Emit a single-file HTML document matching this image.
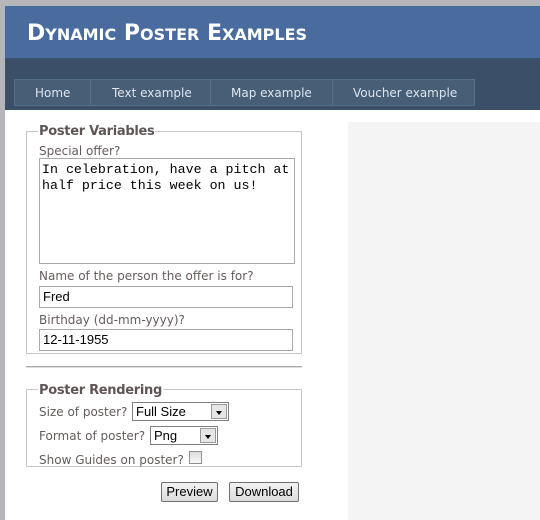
<!DOCTYPE html>
<html><head><style>
*{margin:0;padding:0;box-sizing:border-box}
body{width:540px;height:520px;background:#fff;position:relative;overflow:hidden;font-family:"DejaVu Sans","Liberation Sans",sans-serif}
.a{position:absolute}
.lbl{position:absolute;font-size:12px;color:#665c5c;white-space:nowrap}
.leg{position:absolute;font-size:13px;font-weight:bold;color:#5f5555;background:#fff;padding:0 1px;white-space:nowrap;letter-spacing:-0.3px}
.fs{position:absolute;border:1px solid #c8c8c8}
.inp{position:absolute;border:1px solid #a9a9a9;background:#fff;font-family:"Liberation Sans",sans-serif;font-size:13px;color:#000;padding:2px 0 0 3px}
.sel{position:absolute;border:1px solid #7f7f7f;background:#fff;font-family:"Liberation Sans",sans-serif;font-size:13px;padding:1px 0 0 3px}
.sel b{position:absolute;right:1px;top:1px;bottom:1px;width:16px;background:#e6e6e6;border:1px solid #999}
.sel b:after{content:"";position:absolute;left:4px;top:6px;border-left:3px solid transparent;border-right:3px solid transparent;border-top:4px solid #000}
.btn{position:absolute;border:1px solid #707070;border-radius:2px;background:linear-gradient(#f2f2f2,#dcdcdc);font-family:"Liberation Sans",sans-serif;font-size:13px;text-align:center;line-height:18px}
.nav{position:absolute;top:86px;color:#dde4ec;font-size:12px;white-space:nowrap}
</style></head><body>
<div class="a" style="left:0;top:0;width:540px;height:6px;background:#b5b6ba"></div>
<div class="a" style="left:0;top:0;width:5px;height:520px;background:#b5b6ba"></div>
<div class="a" style="left:5px;top:6px;width:535px;height:52px;background:#4a6b9e"></div>
<div class="a" style="left:27px;top:21px;color:#fff;font-weight:bold;font-size:22px;white-space:nowrap">D<span style="font-size:16px">YNAMIC</span> P<span style="font-size:16px">OSTER</span> E<span style="font-size:16px">XAMPLES</span></div>
<div class="a" style="left:5px;top:58px;width:535px;height:52px;background:#3b5068"></div>
<div class="a" style="left:14px;top:79px;width:461px;height:27px;background:#475e77;border:1px solid #55708c"></div>
<div class="a" style="left:90px;top:79px;width:1px;height:27px;background:#55708c"></div>
<div class="a" style="left:210px;top:79px;width:1px;height:27px;background:#55708c"></div>
<div class="a" style="left:332px;top:79px;width:1px;height:27px;background:#55708c"></div>
<div class="nav" style="left:35px">Home</div>
<div class="nav" style="left:112px">Text example</div>
<div class="nav" style="left:231px">Map example</div>
<div class="nav" style="left:353px">Voucher example</div>
<div class="a" style="left:348px;top:122px;width:192px;height:398px;background:#f4f4f4"></div>

<div class="fs" style="left:26px;top:131px;width:276px;height:223px"></div>
<div class="leg" style="left:38px;top:124px">Poster Variables</div>
<div class="lbl" style="left:39px;top:144px">Special offer?</div>
<div class="inp" style="left:39px;top:158px;width:256px;height:106px;font-family:'Liberation Mono',monospace;font-size:13.3px;line-height:16px;padding:3px 2px">In celebration, have a pitch at half price this week on us!</div>
<div class="lbl" style="left:39px;top:269px">Name of the person the offer is for?</div>
<div class="inp" style="left:39px;top:286px;width:254px;height:22px">Fred</div>
<div class="lbl" style="left:39px;top:313px">Birthday (dd-mm-yyyy)?</div>
<div class="inp" style="left:39px;top:329px;width:254px;height:22px">12-11-1955</div>

<div class="a" style="left:26px;top:366px;width:276px;height:2px;background:#aaa;border-bottom:1px solid #ddd"></div>

<div class="fs" style="left:26px;top:389px;width:276px;height:78px"></div>
<div class="leg" style="left:38px;top:383px">Poster Rendering</div>
<div class="lbl" style="left:39px;top:405px">Size of poster?</div>
<div class="sel" style="left:132px;top:402px;width:97px;height:19px">Full Size<b></b></div>
<div class="lbl" style="left:39px;top:429px">Format of poster?</div>
<div class="sel" style="left:150px;top:426px;width:68px;height:19px">Png<b></b></div>
<div class="lbl" style="left:39px;top:453px">Show Guides on poster?</div>
<div class="a" style="left:189px;top:451px;width:13px;height:13px;border:1px solid #8f8f8f;background:linear-gradient(#ddd,#f8f8f8)"></div>

<div class="btn" style="left:161px;top:482px;width:57px;height:20px">Preview</div>
<div class="btn" style="left:229px;top:482px;width:70px;height:20px">Download</div>
</body></html>
